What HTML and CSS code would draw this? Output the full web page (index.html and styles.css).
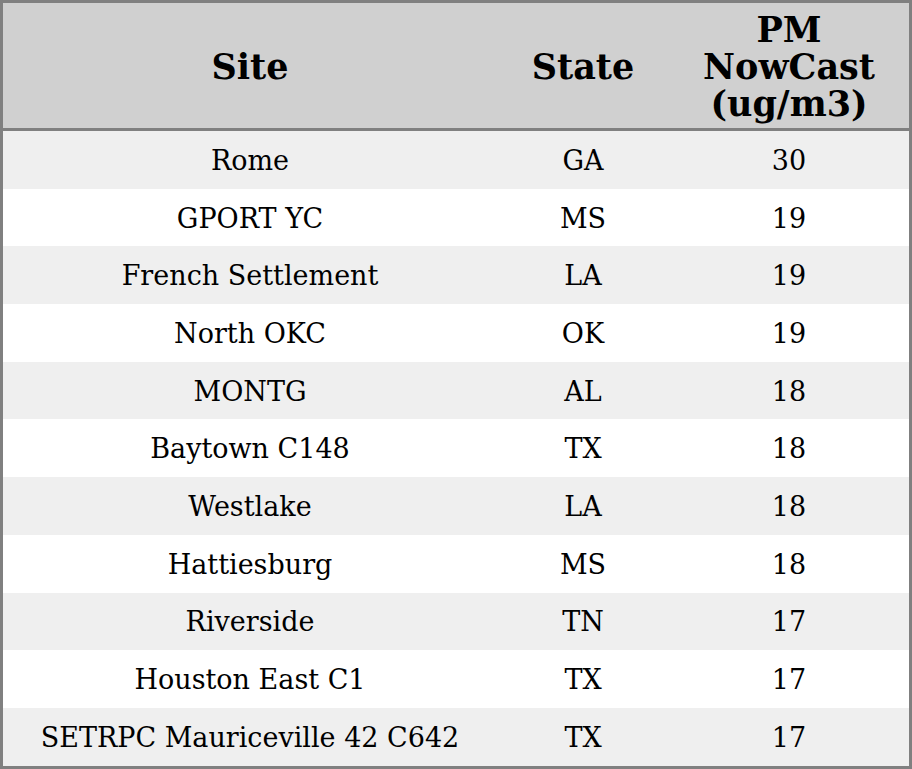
FILE: index.html
```html
<!DOCTYPE html>
<html>
<head>
<meta charset="utf-8">
<link rel="stylesheet" href="styles.css">
</head>
<body>
<table class="data">
  <colgroup>
    <col class="c-site">
    <col class="c-state">
    <col class="c-pm">
  </colgroup>
  <thead>
    <tr><th>Site</th><th>State</th><th>PM<br>NowCast<br>(ug/m3)</th></tr>
  </thead>
  <tbody>
    <tr><td>Rome</td><td>GA</td><td>30</td></tr>
    <tr><td>GPORT YC</td><td>MS</td><td>19</td></tr>
    <tr><td>French Settlement</td><td>LA</td><td>19</td></tr>
    <tr><td>North OKC</td><td>OK</td><td>19</td></tr>
    <tr><td>MONTG</td><td>AL</td><td>18</td></tr>
    <tr><td>Baytown C148</td><td>TX</td><td>18</td></tr>
    <tr><td>Westlake</td><td>LA</td><td>18</td></tr>
    <tr><td>Hattiesburg</td><td>MS</td><td>18</td></tr>
    <tr><td>Riverside</td><td>TN</td><td>17</td></tr>
    <tr><td>Houston East C1</td><td>TX</td><td>17</td></tr>
    <tr><td>SETRPC Mauriceville 42 C642</td><td>TX</td><td>17</td></tr>
  </tbody>
</table>
</body>
</html>
```
FILE: styles.css
```css
html, body {
  margin: 0;
  padding: 0;
  background: #ffffff;
}
.data {
  width: 912px;
  table-layout: fixed;
  border-collapse: separate;
  border-spacing: 0;
  border: 3px solid #808080;
  font-family: "DejaVu Serif", serif;
  color: #000;
}
.c-site { width: 494px; }
.c-state { width: 172px; }
.c-pm { width: 240px; }
.data th {
  background: #d0d0d0;
  font-size: 35px;
  font-weight: bold;
  line-height: 37px;
  height: 123px;
  padding: 2px 0 0;
  text-align: center;
  vertical-align: middle;
  border-bottom: 3px solid #808080;
}
.data td {
  font-size: 27px;
  line-height: 32px;
  height: 55.7px;
  padding: 2px 0 0;
  text-align: center;
  vertical-align: middle;
}
.data tbody tr:nth-child(odd) td {
  background: #efefef;
}
```
